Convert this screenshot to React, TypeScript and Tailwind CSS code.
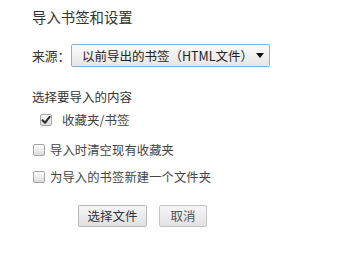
import React from "react";

const font = { fontFamily: '"Noto Sans CJK SC", "Noto Sans", sans-serif' };

function Box({ checked }: { checked?: boolean }) {
  return (
    <span className="relative flex h-[12px] w-[12px] shrink-0 items-center justify-center rounded-[2px] border border-[#a6a6a6] bg-gradient-to-b from-[#fdfdfd] to-[#dcdcdc]">
      {checked && (
        <svg width="10" height="10" viewBox="0 0 10 10" className="block">
          <path d="M1.5 5.2 L4 7.8 L8.6 1.8" fill="none" stroke="#2a2a2a" strokeWidth="2" strokeLinecap="round" strokeLinejoin="round" />
        </svg>
      )}
    </span>
  );
}

export default function App() {
  return (
    <div className="flex h-[265px] w-[352px] flex-col bg-white pl-[32px] text-[#333]" style={font}>
      <div className="mt-[7px] h-[20px] text-[14.4px] leading-[20px] text-[#333]">导入书签和设置</div>

      <div className="mt-[17px] flex h-[23px] items-center">
        <span className="w-[39px] text-[12.8px] leading-[18px] text-[#333]">来源：</span>
        <div className="flex h-[23px] w-[199px] items-center rounded-[2px] border border-[#7eb2ec] bg-gradient-to-b from-[#fbfbfb] to-[#e6e6e6] pl-[10px] pr-[5px]">
          <span className="flex-1 whitespace-nowrap text-[12.5px] leading-[18px] text-[#222]">以前导出的书签（HTML文件）</span>
          <svg width="8" height="5" viewBox="0 0 8 5" className="mr-[0px] block">
            <path d="M0 0 L8 0 L4 5 Z" fill="#111" />
          </svg>
        </div>
      </div>

      <div className="mt-[21px] h-[18px] text-[12.5px] leading-[18px] text-[#333]">选择要导入的内容</div>

      <div className="ml-[8px] mt-[5px] flex h-[18px] items-center gap-[10px]">
        <Box checked />
        <span className="text-[12.5px] leading-[18px] text-[#444]">收藏夹/书签</span>
      </div>

      <div className="ml-[1px] mt-[12px] flex h-[18px] items-center gap-[5px]">
        <Box />
        <span className="text-[12.3px] leading-[18px] tracking-[0.1px] text-[#444]">导入时清空现有收藏夹</span>
      </div>

      <div className="ml-[1px] mt-[9px] flex h-[18px] items-center gap-[5px]">
        <Box />
        <span className="text-[12.3px] leading-[18px] tracking-[0.1px] text-[#444]">为导入的书签新建一个文件夹</span>
      </div>

      <div className="ml-[46px] mt-[19px] flex gap-[12px]">
        <button className="flex h-[22px] w-[69px] items-center justify-center rounded-[2px] border border-[#b8b8b8] bg-gradient-to-b from-[#f6f6f6] to-[#e0e0e0] text-[12.5px] leading-[18px] text-[#333]">
          选择文件
        </button>
        <button className="flex h-[22px] w-[48px] items-center justify-center rounded-[2px] border border-[#c4c4c4] bg-gradient-to-b from-[#f6f6f6] to-[#e2e2e2] text-[12.5px] leading-[18px] text-[#555]">
          取消
        </button>
      </div>
    </div>
  );
}
